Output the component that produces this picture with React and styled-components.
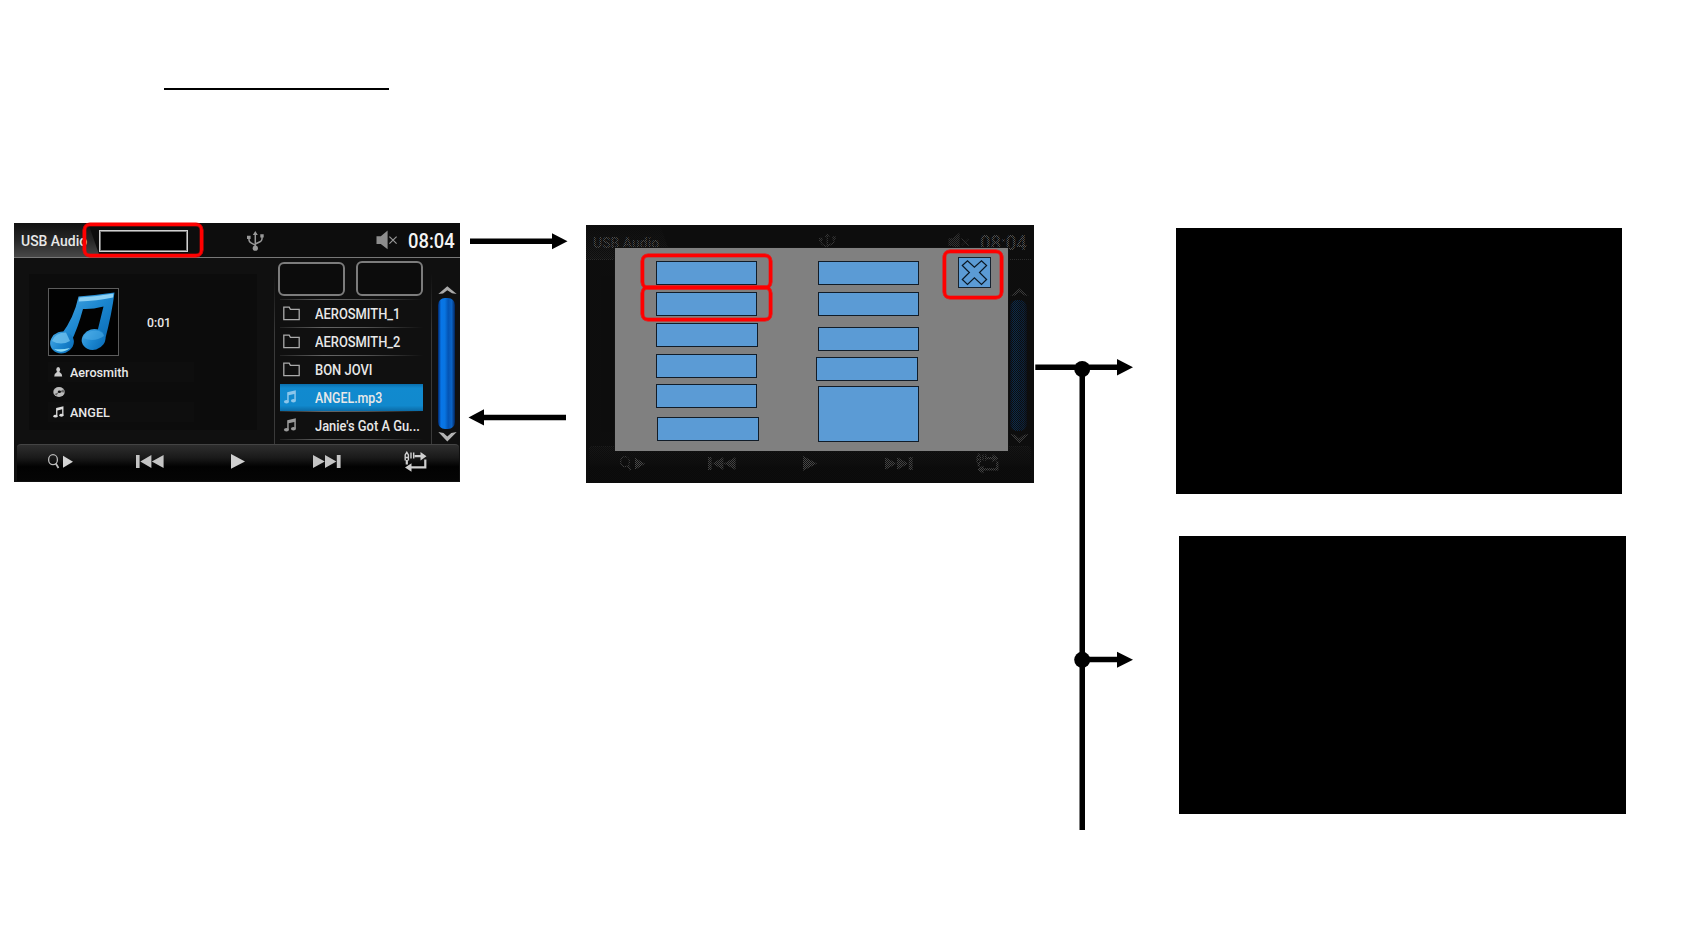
import React from "react";
import styled, { createGlobalStyle, css } from "styled-components";

const Global = createGlobalStyle`
  * { box-sizing: border-box; }
  body { margin: 0; background: #fff; }
`;

const Canvas = styled.main`
  position: relative;
  width: 1684px;
  height: 947px;
  overflow: hidden;
  background: #fff;
  font-family: Roboto, "Liberation Sans", sans-serif;
`;

/* Items placed freely on the diagram */
const Node = styled.div`
  position: absolute;
  left: ${(p) => p.$x}px;
  top: ${(p) => p.$y}px;
  width: ${(p) => p.$w}px;
  height: ${(p) => p.$h}px;
`;

const Connectors = styled.svg`
  position: absolute;
  left: 0;
  top: 0;
`;

const BlackScreen = styled(Node)`
  background: #000;
`;

const TitleRule = styled(Node)`
  background: #000;
`;

const Highlight = styled(Node)`
  border: 3px solid #f00;
  border-radius: 7px;
  box-shadow: 0 0 0 0.5px #f00, inset 0 0 0 0.5px rgba(255, 0, 0, 0.6);
`;

const FieldBox = styled(Node)`
  background: #000;
  border: 1px solid #d0d0d0;
  box-shadow: inset 0 0 0 1px #777;
`;

const Text = styled.span`
  display: block;
  white-space: nowrap;
  color: ${(p) => p.$color || "#e8e8e8"};
  font-size: ${(p) => p.$size}px;
  line-height: 1;
  font-weight: ${(p) => p.$weight || 500};
  letter-spacing: ${(p) => p.$track || 0}px;
  padding-top: ${(p) => p.$drop || 0}px;
  transform: scaleX(${(p) => p.$stretch || 1});
  transform-origin: left center;
`;

const Player = styled.section`
  width: 446px;
  height: 259px;
  display: flex;
  flex-direction: column;
  background: #101010;
  overflow: hidden;
`;

const Header = styled.header`
  height: 35px;
  display: flex;
  align-items: center;
  background: #0d0d0d;
  border-bottom: 1px solid #777;
`;

const Tab = styled.div`
  width: 86px;
  height: 34px;
  padding: 11px 0 0 7px;
  background: linear-gradient(#121212, #262626 50%, #484848);
  clip-path: polygon(0 0, 74px 0, 86px 100%, 0 100%);
`;

const UsbSlot = styled.div`
  width: 18px;
  height: 20px;
  margin: 2px 0 0 147px;
`;

const MuteSlot = styled.div`
  width: 22px;
  height: 20px;
  margin: 0 10px 0 111px;
`;

const Body = styled.div`
  height: 186px;
  display: flex;
`;

const NowPlaying = styled.div`
  width: 228px;
  height: 156px;
  margin: 16px 17px 0 15px;
  padding: 14px 0 0 19px;
  background: #0c0c0c;
`;

const ArtRow = styled.div`
  display: flex;
  align-items: center;
  gap: 28px;
`;

const Art = styled.div`
  width: 71px;
  height: 68px;
  border: 1px solid #5c5c5c;
  background: #020202;
`;

const Meta = styled.div`
  width: 146px;
  margin-top: 6px;
`;

const MetaRow = styled.div`
  height: 20px;
  display: flex;
  align-items: center;
  background: ${(p) => (p.$plain ? "none" : "#0e0e0e")};
`;

const MetaIcon = styled.div`
  width: 22px;
  padding-left: 5px;
  height: 12px;
  svg { display: block; }
`;

const Browser = styled.div`
  width: 158px;
  padding: 3px 0 0 3px;
  border: solid transparent;
  border-width: 0 1px;
  background: linear-gradient(transparent 8%, #3a3a3a 40%, #3a3a3a) left / 1px 100% no-repeat border-box,
    linear-gradient(transparent 8%, #3a3a3a 40%, #3a3a3a) right / 1px 100% no-repeat border-box;
`;

const Actions = styled.div`
  height: 36px;
  display: flex;
  gap: 11px;
`;

const Action = styled.div`
  width: 67px;
  height: ${(p) => (p.$short ? 34 : 35)}px;
  margin-top: ${(p) => (p.$short ? 1 : 0)}px;
  border: 2px solid #7c7c7c;
  border-radius: 6px;
  background: #0c0c0c;
`;

const List = styled.div`
  width: 143px;
  margin: 2px 0 0 2px;
  padding-bottom: 1px;
  background: linear-gradient(90deg, #222, #666 30%, #555 60%, transparent) bottom / 100% 1px no-repeat;
`;

const Track = styled.div`
  height: 28px;
  display: flex;
  align-items: center;
  background: linear-gradient(90deg, #222, #666 30%, #555 60%, transparent) top / 100% 1px no-repeat;
  ${(p) =>
    p.$active &&
    css`
      background: linear-gradient(#0a6fae, #118acf 15%, #1189cd 80%, #0b6ba6);
      border-top: 1px solid transparent;
      background-clip: padding-box;
    `}
`;

const TrackIcon = styled.div`
  flex: none;
  width: 32px;
  margin-left: 3px;
  height: 15px;
  svg { display: block; }
`;

const Scroll = styled.div`
  width: 28px;
  padding: 28px 0 0 6px;
  display: flex;
  flex-direction: column;
  gap: 2px;
  svg { display: block; }
`;

const Bar = styled.div`
  width: 17px;
  height: 131px;
  border-radius: 7px;
  background: linear-gradient(90deg, #00266b, #0876e8 18%, #0875e2 40%, #0454b4 60%, #0b63c4 80%, #02245c);
`;

const Footer = styled.footer`
  height: 37px;
  margin: 0 1px 1px 3px;
  padding: 0 30px 3px;
  border-radius: 4px 4px 0 0;
  border-top: 1px solid #444;
  background: linear-gradient(#2e2e2e, #1a1a1a 35%, #020202 60%, #050505);
  display: flex;
  align-items: center;
  svg { display: block; }
`;

const Control = styled.div`
  width: ${(p) => p.$w}px;
  margin-left: ${(p) => p.$gap || 0}px;
  flex: none;
`;

const Dimmed = styled(Node)`
  background: #0d0d0d;
  overflow: hidden;
`;

const Hatch = styled(Node)`
  background: repeating-conic-gradient(#0d0d0d 0 25%, rgba(13, 13, 13, 0.7) 0 50%) 0 0 / 2px 2px;
`;

const Dialog = styled(Node)`
  display: flex;
  background: #808080;
  border: 1px solid #111;
`;

const Column = styled.div`
  display: flex;
  flex-direction: column;
  width: ${(p) => p.$w}px;
  margin-left: ${(p) => p.$left}px;
  padding-top: 13px;
`;

const Option = styled.div`
  flex: none;
  width: ${(p) => p.$w || 101}px;
  height: ${(p) => p.$h || 24}px;
  margin: ${(p) => p.$gap || 0}px 0 0 ${(p) => p.$shift || 0}px;
  border: 1px solid #111c28;
  background: #5b9bd5;
`;

const Close = styled.div`
  width: 33px;
  height: 31px;
  margin: 9px 0 0 38px;
  border: 1px solid #16222e;
  background: #5b9bd5;
  svg { display: block; }
`;

const NoteIcon = ({ color = "#ddd", w = 11, h = 12 }) => (
  <svg width={w} height={h} viewBox="0 0 12 13" fill={color}>
    <path d="M3.4 2.1 11.4.3V9.8H10V3.6L4.8 4.8V11H3.4Z" />
    <ellipse cx="2.7" cy="11" rx="2.3" ry="1.6" />
    <ellipse cx="9.2" cy="10" rx="2.3" ry="1.6" />
  </svg>
);

const FolderIcon = () => (
  <svg width="17" height="15" viewBox="0 0 17 15" fill="#101010" stroke="#aaa" strokeWidth="1.3">
    <path d="M.8 13.6V1.2H6.2L7.4 3.4H16.2V13.6Z" />
  </svg>
);

const UsbIcon = () => (
  <svg width="18" height="20" viewBox="0 0 18 20" fill="none" stroke="#999" strokeWidth="1.5">
    <path d="M8.3 16V3M2 6.5V9.2Q2.2 11 4 11.8L8.3 14.2M15 5.5V8Q14.8 9.8 13 10.8L8.3 13" />
    <path d="M8.3 0 10.8 4H5.8ZM0 4.7H3.6V8H0ZM13.3 3.2H16.7V6.4H13.3Z" fill="#999" stroke="none" />
    <circle cx="8.3" cy="17.2" r="2.6" fill="#999" stroke="none" />
  </svg>
);

const MuteIcon = () => (
  <svg width="22" height="20" viewBox="0 0 22 20">
    <path d="M.5 6.2H4.8L11.6.5V19.2L4.8 14H.5Z" fill="#8d8d8d" />
    <path d="M13.4 6.6 20.6 13.6M20.6 6.6 13.4 13.6" stroke="#999" strokeWidth="1.2" />
  </svg>
);

const AlbumArt = () => (
  <svg width="69" height="66" viewBox="0 0 69 66">
    <defs>
      <linearGradient id="blue" x1="0" y1="0" x2="1" y2="1">
        <stop offset="0" stopColor="#4aaae6" />
        <stop offset=".5" stopColor="#1b86cf" />
        <stop offset="1" stopColor="#0768b4" />
      </linearGradient>
    </defs>
    <g fill="url(#blue)">
      <path d="M29.5 7.5Q48 6 65.5 3.5 63 24 56 51L47.5 46 54.5 17.5Q43 20.5 34 20 29 39 21.5 54L12 46Q25 29 29.5 7.5Z" />
      <ellipse cx="13" cy="53.5" rx="12" ry="10.8" transform="rotate(-20 13 53.5)" />
      <ellipse cx="44.5" cy="50.5" rx="11.9" ry="10.3" transform="rotate(-15 44.5 50.5)" />
    </g>
    <path d="M30.5 8.6Q48 7.5 64.5 4.6L64 8.4Q48 12 29.7 12.4Z" fill="#8bd0f4" />
    <path d="M3 52Q6 43.5 17 43.5L21 52Q12 57 3 52Z" fill="#6ec0ee" opacity=".8" />
    <path d="M34 49Q37 41.5 47 41.5 54 42 55 47 45 54 34 49Z" fill="#54b2ea" opacity=".5" />
    <path d="M5 60Q12 66 21 59 13 61 5 60Z" fill="#8edcf6" />
  </svg>
);

const PersonIcon = () => (
  <svg width="11" height="12" viewBox="0 0 11 12" fill="#ccc">
    <ellipse cx="5.2" cy="3.6" rx="1.9" ry="2.6" />
    <path d="M1.2 10.6Q1.4 7.4 4.2 5.8H6.2Q9 7.4 9.2 10.6Z" />
  </svg>
);

const DiscIcon = () => (
  <svg width="13" height="12" viewBox="0 0 13 12">
    <ellipse cx="6" cy="6" rx="5.7" ry="4.9" fill="#bbb" />
    <path d="M6 6 10.5 3.3 11.4 6.6ZM6 6 1.5 8 3.5 9.6Z" fill="#666" />
    <ellipse cx="6.4" cy="5.8" rx="1.6" ry="1.3" fill="#111" />
  </svg>
);

const tracks = [
  { name: "AEROSMITH_1", folder: true, stretch: 0.92 },
  { name: "AEROSMITH_2", folder: true, stretch: 0.92 },
  { name: "BON JOVI", folder: true, stretch: 0.925 },
  { name: "ANGEL.mp3", active: true, stretch: 0.885 },
  { name: "Janie's Got A Gu...", stretch: 0.92 },
];

function UsbPlayer() {
  return (
    <Player>
      <Header>
        <Tab>
          <Text $size={15} $stretch={0.93}>USB Audio</Text>
        </Tab>
        <UsbSlot><UsbIcon /></UsbSlot>
        <MuteSlot><MuteIcon /></MuteSlot>
        <Text $size={20} $stretch={0.92} $drop={2} $color="#f4f4f4">08:04</Text>
      </Header>
      <Body>
        <NowPlaying>
          <ArtRow>
            <Art><AlbumArt /></Art>
            <Text $size={13} $stretch={0.94} $drop={1}>0:01</Text>
          </ArtRow>
          <Meta>
            <MetaRow><MetaIcon><PersonIcon /></MetaIcon><Text $size={13} $stretch={0.97}>Aerosmith</Text></MetaRow>
            <MetaRow $plain><MetaIcon><DiscIcon /></MetaIcon></MetaRow>
            <MetaRow><MetaIcon><NoteIcon /></MetaIcon><Text $size={13} $stretch={0.97}>ANGEL</Text></MetaRow>
          </Meta>
        </NowPlaying>
        <Browser>
          <Actions>
            <Action $short />
            <Action />
          </Actions>
          <List>
            {tracks.map((t) => (
              <Track key={t.name} $active={t.active}>
                <TrackIcon>
                  {t.folder ? <FolderIcon /> : <NoteIcon color={t.active ? "#8cc6ea" : "#9a9a9a"} w={14} h={14} />}
                </TrackIcon>
                <Text $size={14} $drop={t.active ? 0 : 2} $stretch={t.stretch}>{t.name}</Text>
              </Track>
            ))}
          </List>
        </Browser>
        <Scroll>
          <svg width="19" height="10" viewBox="0 0 19 10"><path d="M.3 8 9.3.3 18.7 8 14 7.3 9.3 4.2 5 7.5Z" fill="#aaa" /></svg>
          <Bar />
          <svg width="19" height="11" viewBox="0 0 19 11"><path d="M.3 1 5.5 2 9.3 5.5 13.3 2 18.7 1 9.3 10.5Z" fill="#b4b4b4" /></svg>
        </Scroll>
      </Body>
      <Footer>
        <Control $w={27}>
          <svg width="27" height="15" viewBox="0 0 27 15">
            <ellipse cx="6" cy="5.7" rx="4.4" ry="5" fill="none" stroke="#bbb" strokeWidth="1.3" />
            <path d="M8.8 9.5 11.5 14" stroke="#bbb" strokeWidth="1.8" />
            <path d="M16 1.8 26 7.8 16 13.8Z" fill="#d4d4d4" />
          </svg>
        </Control>
        <Control $w={28} $gap={62}>
          <svg width="28" height="13" viewBox="0 0 28 13" fill="#c4c4c4">
            <path d="M0 0H3.6V13H0ZM15.4 0V13L4.3 6.5ZM27.6 0V13L15.8 6.5Z" />
          </svg>
        </Control>
        <Control $w={14} $gap={67}>
          <svg width="14" height="15" viewBox="0 0 14 15"><path d="M0 0 14 7.4 0 14.8Z" fill="#d0d0d0" /></svg>
        </Control>
        <Control $w={28} $gap={68}>
          <svg width="28" height="13" viewBox="0 0 28 13" fill="#c4c4c4">
            <path d="M0 0 11.8 6.5 0 13ZM12 0 23.4 6.5 12 13ZM23.8 0H27.6V13H23.8Z" />
          </svg>
        </Control>
        <Control $w={24} $gap={63}>
          <svg width="24" height="21" viewBox="0 0 24 21" fill="none" stroke="#d0d0d0" strokeWidth="1.7">
            <path d="M1.2 9.5V4L2.8 1.3 4.4 4V9.5M1.2 6.5H4.4M7 1.5V7.5M9.7 1.5V7.5" strokeWidth="1.4" />
            <path d="M10.5 5.2H17M2.8 9V13.5M21.3 8.5V16.4H7" strokeWidth="2.2" />
            <path d="M16.5 1 22.5 5.2 16.5 9.4ZM7.5 12.2 1 16.5 7.5 20.8Z" fill="#d0d0d0" stroke="none" />
          </svg>
        </Control>
      </Footer>
    </Player>
  );
}

export default function App() {
  return (
    <Canvas>
      <Global />
      <TitleRule $x={164} $y={88} $w={225} $h={2} />

      <Node $x={14} $y={223} $w={446} $h={259}><UsbPlayer /></Node>
      <FieldBox $x={99} $y={230} $w={89} $h={22} />
      <Highlight $x={83} $y={223} $w={120} $h={34} />

      <Dimmed $x={586} $y={225} $w={448} $h={258}><UsbPlayer /></Dimmed>
      <Hatch $x={586} $y={225} $w={448} $h={258} />
      <Dialog $x={614} $y={247} $w={395} $h={205}>
        <Column $w={103} $left={41}>
          <Option />
          <Option $gap={7} />
          <Option $w={102} $gap={7} />
          <Option $gap={7} />
          <Option $gap={6} />
          <Option $w={102} $gap={9} $shift={1} />
        </Column>
        <Column $w={104} $left={57}>
          <Option $shift={2} />
          <Option $gap={7} $shift={2} />
          <Option $gap={11} $shift={2} />
          <Option $w={102} $gap={6} />
          <Option $h={56} $gap={5} $shift={2} />
        </Column>
        <Close>
          <svg width="31" height="29" viewBox="0 0 31 29" fill="none" stroke="#0b1824" strokeWidth="1.2">
            <path d="M3.3 7.5 8.5 2.7 15.4 9.3 22.5 2.7 27.6 7.5 20.5 14.5 27.6 21.5 22.5 26.4 15.4 19.8 8.5 26.4 3.3 21.5 10.4 14.5Z" />
          </svg>
        </Close>
      </Dialog>
      <Highlight $x={641} $y={254} $w={131} $h={35} />
      <Highlight $x={641} $y={286} $w={131} $h={35} />
      <Highlight $x={943} $y={250} $w={60} $h={49} />

      <BlackScreen $x={1176} $y={228} $w={446} $h={266} />
      <BlackScreen $x={1179} $y={536} $w={447} $h={278} />

      <Connectors width="1684" height="947" viewBox="0 0 1684 947">
        <path d="M470 238.5H552V233.3L567.5 241.3 552 249.3V244H470Z" />
        <path d="M566 414.8H484V409.3L468.5 417.4 484 425.4V420.2H566Z" />
        <path d="M1035.3 364.5H1117V359L1133 367.3 1117 375.5V370H1035.3Z" />
        <path d="M1082 656.8H1117V651.7L1133 659.7 1117 667.7V662.2H1082Z" />
        <path d="M1079.5 369H1085V830H1079.5Z" />
        <circle cx="1082.2" cy="369" r="8" />
        <circle cx="1082.2" cy="659.8" r="8" />
      </Connectors>
    </Canvas>
  );
}
